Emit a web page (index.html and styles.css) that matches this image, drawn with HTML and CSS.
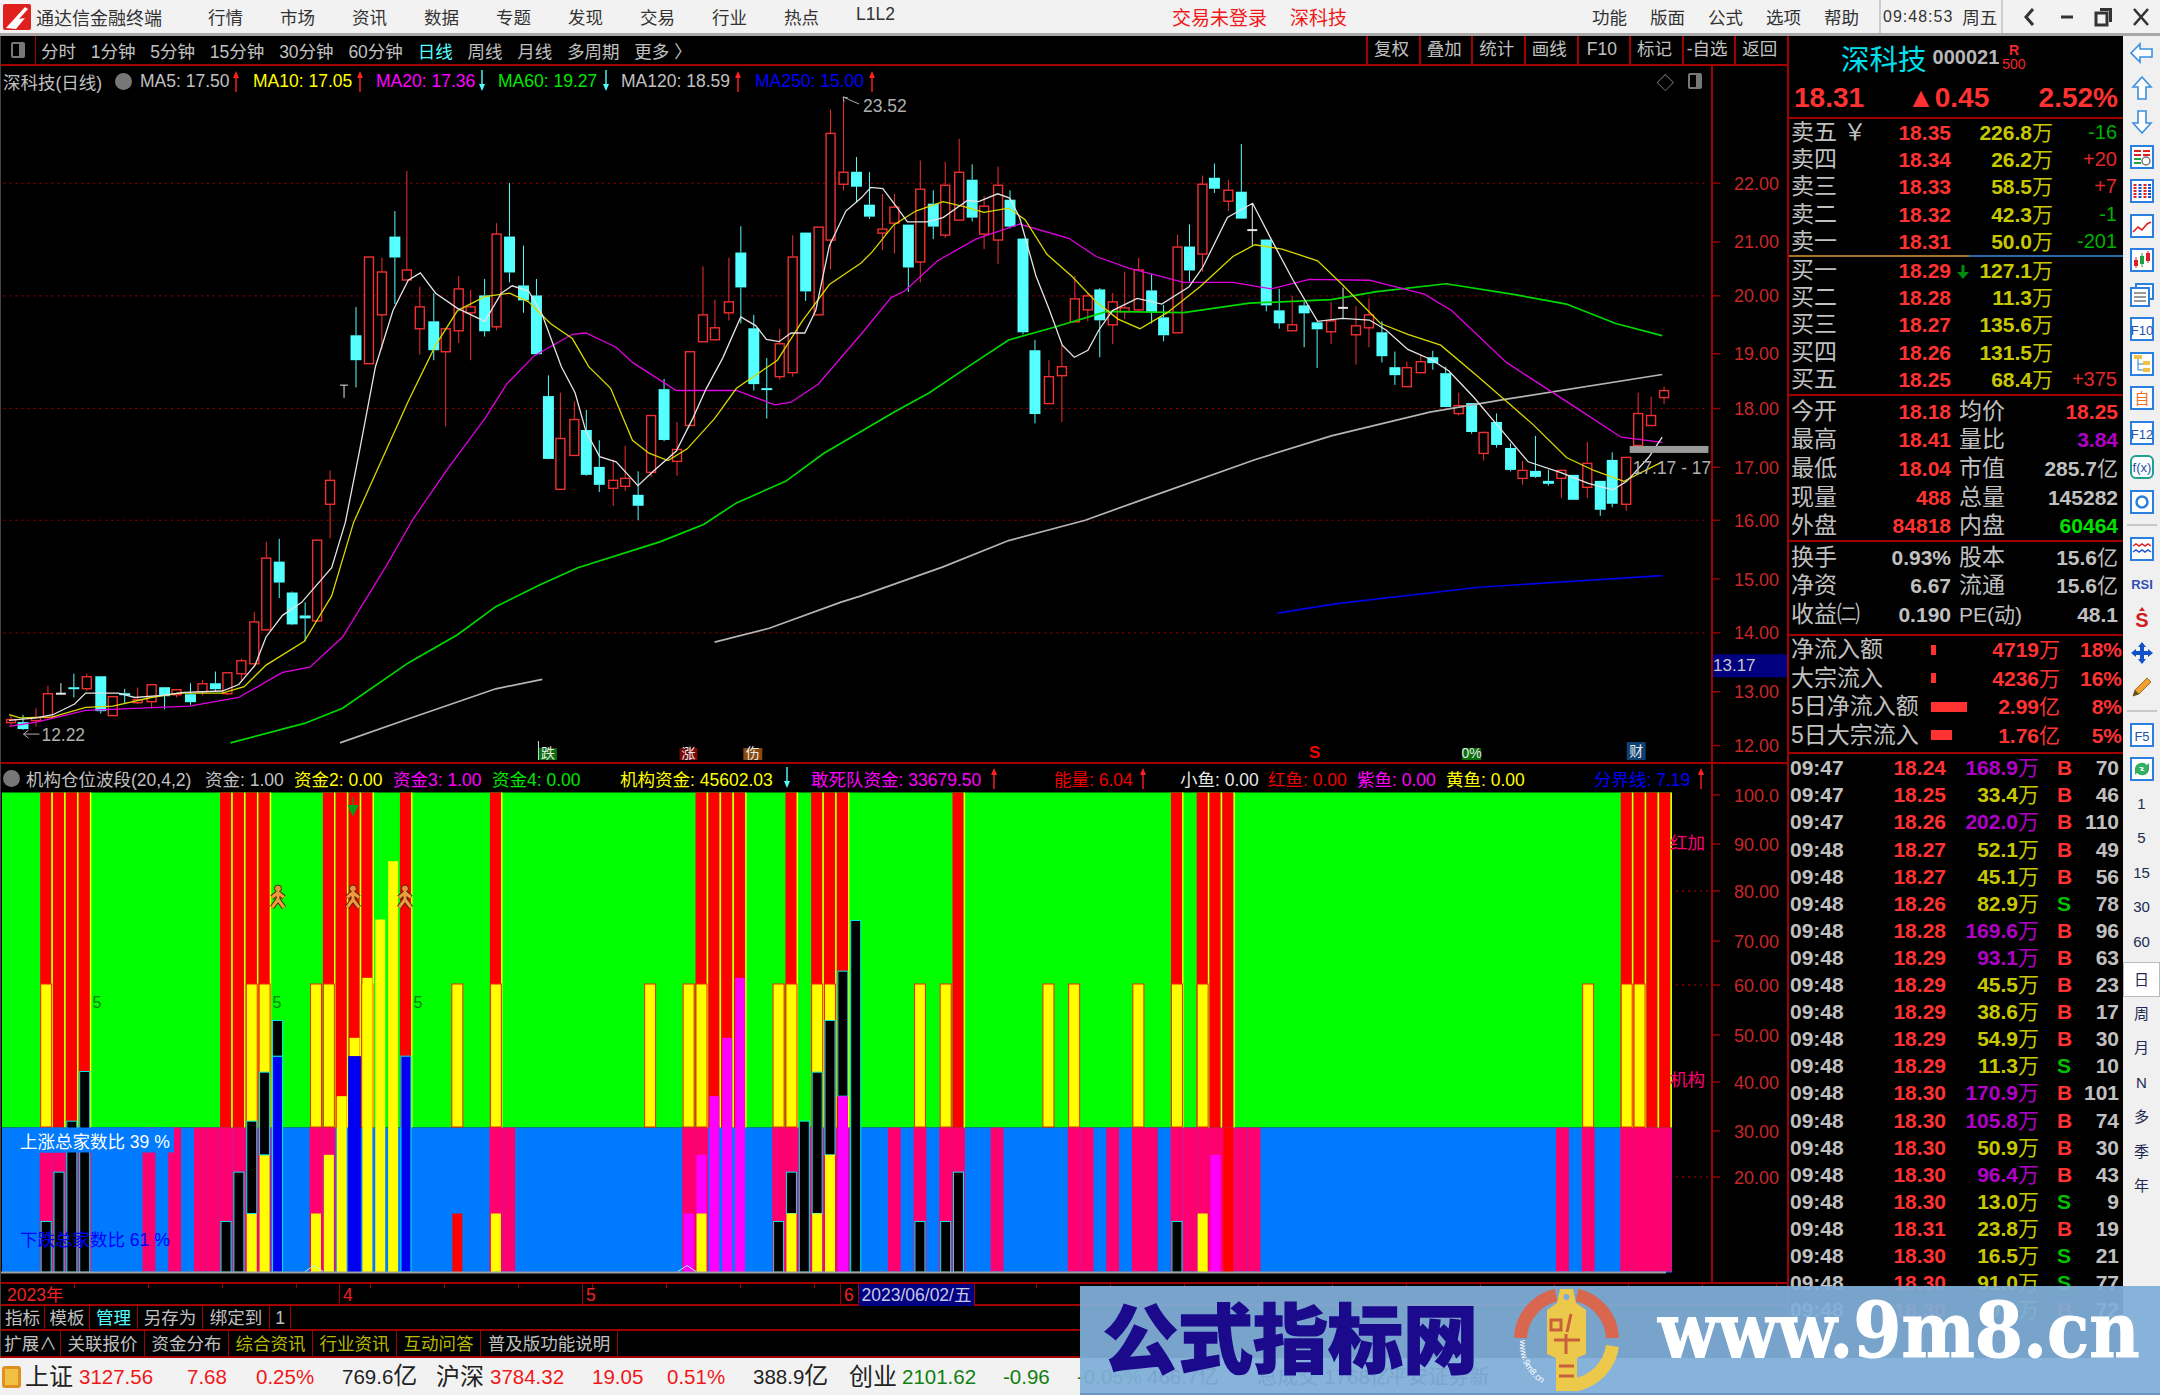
FILE: index.html

```html
<!DOCTYPE html>
<html lang="zh-CN">
<head>
  <meta charset="UTF-8" />
  <title>通达信金融终端</title>
  <link rel="stylesheet" href="styles.css">
</head>
<body>
  <svg class="defs" aria-hidden="true">
    <symbol id="arr-up" viewBox="0 0 8 22"><path d="M4 22V6" stroke="#ff2020" stroke-width="1.4"/><path d="M1 8l3-7 3 7z" fill="#ff2020"/></symbol>
    <symbol id="arr-down" viewBox="0 0 8 22"><path d="M4 0v16" stroke="#54ffff" stroke-width="1.4"/><path d="M1 14l3 7 3-7z" fill="#54ffff"/></symbol>
  </svg>

  <header class="titlebar">
    <svg class="logo" viewBox="0 0 28 26"><rect width="28" height="26" rx="2" fill="#e0201c"/><path d="M3 24L22 3l3 2-9 10 6-1-9 11z" fill="#fff"/></svg>
    <span class="app-name">通达信金融终端</span>
    <nav class="menu">
      <span>行情</span><span>市场</span><span>资讯</span><span>数据</span><span>专题</span><span>发现</span><span>交易</span><span>行业</span><span>热点</span><span>L1L2</span>
    </nav>
    <div class="alerts"><span>交易未登录</span><span>深科技</span></div>
    <nav class="menu menu-right"><span>功能</span><span>版面</span><span>公式</span><span>选项</span><span>帮助</span></nav>
    <div class="clock"><span class="time">09:48:53</span><span>周五</span></div>
    <div class="win-btns">
      <svg viewBox="0 0 36 32"><path d="M21 8l-7 8 7 8" fill="none" stroke="#333" stroke-width="3"/></svg>
      <svg viewBox="0 0 36 32"><path d="M12 16h12" stroke="#333" stroke-width="3"/></svg>
      <svg viewBox="0 0 36 32"><path d="M14 7h12v14h-3v-11h-9z" fill="#333"/><rect x="10" y="12" width="11" height="12" fill="none" stroke="#333" stroke-width="3"/></svg>
      <svg viewBox="0 0 36 32"><path d="M11 8l14 16M25 8l-14 16" stroke="#333" stroke-width="2.6"/></svg>
    </div>
  </header>

  <div class="body-row">
    <main class="workspace">
      <div class="toolbar">
        <div class="tool-icon"><i></i></div>
        <div class="periods">
          <span>分时</span><span>1分钟</span><span>5分钟</span><span>15分钟</span><span>30分钟</span><span>60分钟</span><span class="active">日线</span><span>周线</span><span>月线</span><span>多周期</span><span>更多 〉</span>
        </div>
        <div class="tool-right">
          <span>复权</span><span>叠加</span><span>统计</span><span>画线</span><span>F10</span><span>标记</span><span>-自选</span><span>返回</span>
        </div>
      </div>

      <section class="pane pane-price">
        <div class="plot">
          <div class="legend legend-price">
            <span>深科技(日线)</span><i class="knob"></i>
            <span class="c-gray">MA5: 17.50</span><svg class="arrow"><use href="#arr-up"/></svg>
            <span class="c-yellow">MA10: 17.05</span><svg class="arrow"><use href="#arr-up"/></svg>
            <span class="c-magenta">MA20: 17.36</span><svg class="arrow"><use href="#arr-down"/></svg>
            <span class="c-green">MA60: 19.27</span><svg class="arrow"><use href="#arr-down"/></svg>
            <span class="c-gray">MA120: 18.59</span><svg class="arrow"><use href="#arr-up"/></svg>
            <span class="c-blue">MA250: 15.00</span><svg class="arrow"><use href="#arr-up"/></svg>
            <span class="legend-tools"><b>◇</b><span class="tool-icon-sm"><i></i></span></span>
          </div>
          <svg id="price-plot" class="plot-svg" viewBox="0 96 1710 668"></svg>
        </div>
        <svg id="price-axis" class="axis" viewBox="0 66 75 698"></svg>
      </section>

      <section class="pane pane-fund">
        <div class="plot">
          <div class="legend legend-fund">
            <i class="knob"></i>
            <span>机构仓位波段(20,4,2)</span>
            <span class="c-gray">资金: 1.00</span>
            <span class="c-yellow">资金2: 0.00</span>
            <span class="c-magenta">资金3: 1.00</span>
            <span class="c-green">资金4: 0.00</span>
            <span class="c-yellow">机构资金: 45602.03</span><svg class="arrow"><use href="#arr-down"/></svg>
            <span class="c-magenta">敢死队资金: 33679.50</span><svg class="arrow"><use href="#arr-up"/></svg>
            <span class="c-red">能量: 6.04</span><svg class="arrow"><use href="#arr-up"/></svg>
            <span class="c-white">小鱼: 0.00</span>
            <span class="c-red">红鱼: 0.00</span>
            <span class="c-magenta">紫鱼: 0.00</span>
            <span class="c-yellow">黄鱼: 0.00</span>
            <span class="c-blue">分界线: 7.19</span><svg class="arrow"><use href="#arr-up"/></svg>
          </div>
          <svg id="fund-plot" class="plot-svg" viewBox="0 793 1710 489"></svg>
        </div>
        <svg id="fund-axis" class="axis" viewBox="0 765 75 517"></svg>
      </section>

      <div class="date-axis">
        <span>2023年</span><span>4</span><span>5</span><span>6</span><span class="date-now">2023/06/02/五</span>
      </div>
      <div class="tabs">
        <span>指标</span><span>模板</span><span class="active">管理</span><span>另存为</span><span>绑定到</span><span>1</span>
      </div>
      <div class="tabs tabs-info">
        <span>扩展∧</span><span>关联报价</span><span>资金分布</span><span class="olive">综合资讯</span><span class="olive">行业资讯</span><span class="olive">互动问答</span><span>普及版功能说明</span>
      </div>
    </main>

    <aside class="quote">
      <div class="q-name"><span class="q-title">深科技</span><span class="q-code">000021</span><span class="q-flag"><b>R</b><small>500</small></span></div>
      <div class="q-price"><span>18.31</span><span>▲0.45</span><span>2.52%</span></div>

      <div class="book">
        <div class="book-row"><span>卖五 ￥</span><b>18.35</b><em>226.8<u>万</u></em><i class="c-grn">-16</i></div>
        <div class="book-row"><span>卖四</span><b>18.34</b><em>26.2<u>万</u></em><i>+20</i></div>
        <div class="book-row"><span>卖三</span><b>18.33</b><em>58.5<u>万</u></em><i>+7</i></div>
        <div class="book-row"><span>卖二</span><b>18.32</b><em>42.3<u>万</u></em><i class="c-grn">-1</i></div>
        <div class="book-row"><span>卖一</span><b>18.31</b><em>50.0<u>万</u></em><i class="c-grn">-201</i></div>
      </div>
      <div class="book-split"></div>
      <div class="book book-buy">
        <div class="book-row"><span>买一</span><b>18.29</b><em><svg class="dn-arrow" viewBox="0 0 12 14"><path d="M4.500 0h3v7H12l-6 7-6-7h4.500z" fill="#008a10"/></svg>127.1<u>万</u></em><i></i></div>
        <div class="book-row"><span>买二</span><b>18.28</b><em>11.3<u>万</u></em><i></i></div>
        <div class="book-row"><span>买三</span><b>18.27</b><em>135.6<u>万</u></em><i></i></div>
        <div class="book-row"><span>买四</span><b>18.26</b><em>131.5<u>万</u></em><i></i></div>
        <div class="book-row"><span>买五</span><b>18.25</b><em>68.4<u>万</u></em><i>+375</i></div>
      </div>

      <div class="stats">
        <div class="stat-row"><span>今开</span><b class="up">18.18</b><span>均价</span><b class="up">18.25</b></div>
        <div class="stat-row"><span>最高</span><b class="up">18.41</b><span>量比</span><b class="purple">3.84</b></div>
        <div class="stat-row"><span>最低</span><b class="up">18.04</b><span>市值</span><b>285.7<u>亿</u></b></div>
        <div class="stat-row"><span>现量</span><b class="up">488</b><span>总量</span><b>145282</b></div>
        <div class="stat-row"><span>外盘</span><b class="up">84818</b><span>内盘</span><b class="down">60464</b></div>
      </div>
      <div class="stats stats-tight">
        <div class="stat-row"><span>换手</span><b>0.93%</b><span>股本</span><b>15.6<u>亿</u></b></div>
        <div class="stat-row"><span>净资</span><b>6.67</b><span>流通</span><b>15.6<u>亿</u></b></div>
        <div class="stat-row"><span>收益㈡</span><b>0.190</b><span class="pe">PE(动)</span><b>48.1</b></div>
      </div>
      <div class="flows">
        <div class="flow-row"><span>净流入额</span><i class="bar bar-s"></i><b>4719<u>万</u></b><b>18%</b></div>
        <div class="flow-row"><span>大宗流入</span><i class="bar bar-s"></i><b>4236<u>万</u></b><b>16%</b></div>
        <div class="flow-row"><span>5日净流入额</span><i class="bar bar-l"></i><b>2.99<u>亿</u></b><b>8%</b></div>
        <div class="flow-row"><span>5日大宗流入</span><i class="bar bar-m"></i><b>1.76<u>亿</u></b><b>5%</b></div>
      </div>
      <div id="ticks" class="ticks"></div>
    </aside>

    <aside class="rail">
      <svg viewBox="0 0 24 24"><path d="M1 12l9-9v5h12v8H10v5z" class="ic"/></svg>
      <svg viewBox="0 0 24 24"><path d="M12 1l9 10h-5v12H8V11H3z" class="ic"/></svg>
      <svg viewBox="0 0 24 24"><path d="M12 23l9-10h-5V1H8v12H3z" class="ic"/></svg>
      <svg viewBox="0 0 24 24"><rect x="1" y="1" width="22" height="22" class="bx"/><path d="M4 6h7M13 6h7M13 10h7M4 10h7" stroke="#e02020" stroke-width="2"/><path d="M4 14h7M4 18h7" stroke="#20a040" stroke-width="2"/><circle cx="16" cy="16" r="4" fill="none" stroke="#777" stroke-width="1.5"/></svg>
      <svg viewBox="0 0 24 24"><rect x="1" y="1" width="22" height="22" class="bx"/><path d="M5 5v14M15 5v14" stroke="#e02020" stroke-width="3" stroke-dasharray="2 1"/><path d="M10 5v14" stroke="#2050d0" stroke-width="3" stroke-dasharray="2 1"/><path d="M19.500 5v14" stroke="#2050d0" stroke-width="3" stroke-dasharray="2 1"/></svg>
      <svg viewBox="0 0 24 24"><rect x="1" y="1" width="22" height="22" class="bx"/><path d="M3 18l5-5 4 3 5-6 4-2" fill="none" stroke="#e02020" stroke-width="1.6"/></svg>
      <svg viewBox="0 0 24 24"><rect x="1" y="1" width="22" height="22" class="bx"/><path d="M6 9v11M18 3v12" stroke="#e02020"/><path d="M12 5v14" stroke="#20a040"/><rect x="4" y="12" width="4" height="6" fill="#e02020"/><rect x="10" y="8" width="4" height="8" fill="#20a040"/><rect x="16" y="5" width="4" height="8" fill="#e02020"/></svg>
      <svg viewBox="0 0 24 24"><rect x="6" y="1" width="17" height="15" class="bx"/><rect x="1" y="5" width="18" height="18" class="bx"/><path d="M4 10h12M4 14h12M4 18h12" stroke="#777" stroke-width="1.6"/></svg>
      <svg viewBox="0 0 24 24"><rect x="1" y="1" width="22" height="22" class="bx"/><text x="12" y="18" class="rail-txt">F10</text></svg>
      <svg viewBox="0 0 24 24"><rect x="1" y="1" width="22" height="22" class="bx"/><path d="M8 7v11h6M8 12h6" fill="none" stroke="#2a7fd8"/><rect x="4" y="3" width="8" height="4" fill="#f0c040"/><rect x="13" y="9" width="7" height="4" fill="#f0c040"/><rect x="13" y="16" width="7" height="4" fill="#f0c040"/></svg>
      <svg viewBox="0 0 24 24"><rect x="1" y="1" width="22" height="22" class="bx"/><text x="12" y="18" class="rail-txt rail-orange">自</text></svg>
      <svg viewBox="0 0 24 24"><rect x="1" y="1" width="22" height="22" class="bx"/><text x="12" y="18" class="rail-txt">F12</text></svg>
      <svg viewBox="0 0 24 24"><rect x="1" y="1" width="22" height="22" rx="5" fill="#fff" stroke="#20a090" stroke-width="2"/><text x="12" y="17" class="rail-txt">f(x)</text></svg>
      <svg viewBox="0 0 24 24"><rect x="1" y="1" width="22" height="22" class="bx"/><circle cx="12" cy="12" r="5.500" fill="none" stroke="#2a7fd8" stroke-width="2.500"/></svg>
      <hr class="rail-sep">
      <svg viewBox="0 0 24 24"><rect x="1" y="1" width="22" height="22" class="bx"/><path d="M3 9l3-2 3 2 3-2 3 2 3-2 3 2" fill="none" stroke="#e02020" stroke-width="1.5"/><path d="M3 15l3-2 3 2 3-2 3 2 3-2 3 2" fill="none" stroke="#2050d0" stroke-width="1.5"/></svg>
      <svg viewBox="0 0 24 24"><text x="12" y="17" class="rail-rsi">RSI</text></svg>
      <svg viewBox="0 0 24 24"><path d="M12 1l3 4H9z" fill="#d02020"/><text x="12" y="21" class="rail-s">S</text></svg>
      <svg viewBox="0 0 24 24"><path d="M12 1l4 5h-2v4h4V8l5 4-5 4v-2h-4v4h2l-4 5-4-5h2v-4H6v2l-5-4 5-4v2h4V6H8z" fill="#1050c8"/></svg>
      <svg viewBox="0 0 24 24"><path d="M3 21l2-6L17 3l4 4L9 19z" fill="#f0a030" stroke="#a07020"/><path d="M3 21l2-6 4 4z" fill="#553"/></svg>
      <hr class="rail-sep">
      <svg viewBox="0 0 24 24"><rect x="1" y="1" width="22" height="22" class="bx"/><text x="12" y="18" class="rail-txt">F5</text></svg>
      <svg viewBox="0 0 24 24"><rect x="1" y="1" width="22" height="22" class="bx"/><path d="M5 11a7 7 0 0 1 12-3l2-2v7h-7l2-2a4 4 0 0 0-6 1zM19 13a7 7 0 0 1-12 3l-2 2v-7h7l-2 2a4 4 0 0 0 6-1z" fill="#30b060"/></svg>
      <div class="rail-periods">
        <span>1</span><span>5</span><span>15</span><span>30</span><span>60</span>
        <span class="on">日</span><span>周</span><span>月</span><span>N</span><span>多</span><span>季</span><span>年</span>
      </div>
    </aside>
  </div>

  <footer class="statusbar">
    <i class="status-icon"></i>
    <span class="idx">上证</span><span class="up">3127.56</span><span class="up">7.68</span><span class="up">0.25%</span><span>769.6<u class="unit">亿</u></span>
    <span class="idx">沪深</span><span class="up">3784.32</span><span class="up">19.05</span><span class="up">0.51%</span><span>388.9<u class="unit">亿</u></span>
    <span class="idx">创业</span><span class="dn">2101.62</span><span class="dn">-0.96</span><span class="dn">-0.05%</span><span>466.7亿</span>
    <span>总成交 1768亿</span><span>平安证券新</span>
  </footer>

  <div class="watermark">
    <span class="wm-cn">公式指标网</span>
    <svg class="wm-logo" viewBox="0 0 105 104">
      <path d="M6.500 50A46 46 0 0 1 42 7" fill="none" stroke="#d9664e" stroke-width="13"/>
      <path d="M63 7A46 46 0 0 1 98.500 50" fill="none" stroke="#d9664e" stroke-width="13"/>
      <path d="M98.500 58A46 46 0 0 1 60 97" fill="none" stroke="#ecc94b" stroke-width="13"/>
      <path id="wm-arc" d="M6 52A46 46 0 0 0 50 102" fill="none"/>
      <text class="wm-arc-text"><textPath href="#wm-arc">www.9m8.cn</textPath></text>
      <path d="M46 1h13l3 14 10 7v44l-9 4v33H42V70l-9-4V22l10-7z" fill="#ecc94b"/>
      <circle cx="52.500" cy="9" r="3" fill="#7fadd8"/>
      <path d="M37 32h10v10H37zM57 26l-4 18M40 52h26M52 46v20M45 78h15M45 88h15" fill="none" stroke="#c8603c" stroke-width="3"/>
    </svg>
    <span class="wm-url">www.9m8.cn</span>
  </div>

  <script src="chart.js"></script>
</body>
</html>
```

FILE: styles.css

```css
:root {
  --line: #a00000;
  --up: #ff3232;
  --gray: #c0c0c0;
  --cyan: #54ffff;
}

* {
  box-sizing: border-box;
}

html, body {
  margin: 0;
  height: 100%;
}

body {
  width: 2160px;
  height: 1395px;
  overflow: hidden;
  background: #000;
  color: var(--gray);
  font-family: "Liberation Sans", "Noto Sans CJK SC", sans-serif;
  font-size: 17.5px;
  display: flex;
  flex-direction: column;
  position: relative;
}

.defs {
  position: absolute;
  width: 0;
  height: 0;
}

/* title bar */
.titlebar {
  height: 36px;
  flex: none;
  background: #f2f2f2;
  border-bottom: 3px solid #a8a8a8;
  color: #333;
  display: flex;
  align-items: center;
}

.logo {
  width: 28px;
  height: 26px;
  margin-left: 3px;
}

.app-name {
  margin-left: 5px;
  width: 172px;
  font-size: 18px;
}

.menu {
  display: flex;
  gap: 37px;
}

.alerts {
  margin-left: 277px;
  display: flex;
  gap: 23px;
  color: #f01818;
  font-size: 19px;
}

.menu-right {
  margin-left: auto;
  gap: 23px;
}

.clock {
  margin-left: 20px;
  height: 100%;
  width: 124px;
  border-left: 2px solid #ccc;
  border-right: 2px solid #ccc;
  display: flex;
  align-items: center;
  gap: 9px;
  padding-left: 2px;
}

.time {
  font-size: 16px;
  letter-spacing: 1px;
}

.win-btns {
  display: flex;
  width: 157px;
  gap: 1px;
  padding-left: 9px;
}

.win-btns svg {
  width: 36px;
  height: 32px;
}

/* toolbar */
.body-row {
  flex: 1;
  display: flex;
  min-height: 0;
}

.workspace {
  width: 1787px;
  flex: none;
  display: flex;
  flex-direction: column;
  border-left: 1px solid #444;
}

.toolbar {
  height: 30px;
  flex: none;
  display: flex;
  align-items: center;
  border-bottom: 2px solid var(--line);
}

.tool-icon {
  width: 35px;
  height: 100%;
  border-right: 1px solid var(--line);
  display: flex;
  align-items: center;
  justify-content: center;
}

.tool-icon i, .tool-icon-sm i {
  display: block;
  width: 14px;
  height: 16px;
  border: 2px solid #777;
  border-right-width: 6px;
  border-radius: 2px;
  background: #000;
}

.periods {
  margin-left: 5px;
  display: flex;
  gap: 14.8px;
}

.active {
  color: var(--cyan);
}

.tool-right {
  margin-left: auto;
  height: 100%;
  display: flex;
}

.tool-right span {
  width: 52.6px;
  border-left: 2px solid var(--line);
  text-align: center;
  padding-right: 4px;
  line-height: 27px;
}

/* panes */
.pane {
  display: flex;
  flex: none;
}

.pane-price {
  height: 698px;
  border-bottom: 2px solid var(--line);
}

.pane-fund {
  height: 518px;
}

.plot {
  width: 1710px;
  flex: none;
  display: flex;
  flex-direction: column;
}

.plot-svg {
  display: block;
  width: 1710px;
  flex: 1;
  min-height: 0;
}

.axis {
  width: 75px;
  flex: none;
  border-left: 2px solid var(--line);
  box-sizing: content-box;
  height: 100%;
}

.legend {
  height: 30px;
  flex: none;
  display: grid;
  align-items: center;
  padding-left: 2px;
  white-space: nowrap;
}

/* legend columns sit where the terminal draws them */
.legend-price {
  grid-template-columns: 112px 25px 92px 21px 103px 20px 102px 20px 104px 19px 113px 21px 113px 20px 1fr;
}

.legend-fund {
  height: 28px;
  grid-template-columns: 23px 179px 89px 99px 99px 128px 163px 28px 179px 64px 85px 41px 88px 89px 89px 148px 103px 8px;
}

.legend-tools {
  justify-self: end;
  margin-right: 9px;
  display: flex;
  align-items: center;
  gap: 14px;
}

.legend-tools b {
  font-weight: 400;
  color: #888;
}

.tool-icon-sm {
  display: block;
}

.knob {
  width: 17px;
  height: 17px;
  border-radius: 50%;
  background: #777;
}

.arrow {
  width: 8px;
  height: 22px;
}

.c-gray { color: var(--gray); }
.c-white { color: #e8e8e8; }
.c-yellow { color: #ffff00; }
.c-magenta { color: #ff00ff; }
.c-green { color: #00e800; }
.c-blue { color: #0000ff; }
.c-red { color: #f00000; }

/* date axis and tabs */
.date-axis {
  height: 24px;
  flex: none;
  display: grid;
  grid-template-columns: 339px 243px 258px 18px 116px;
  border-top: 2px solid var(--line);
  border-bottom: 2px solid var(--line);
  color: #f02020;
  line-height: 22px;
  background: repeating-linear-gradient(90deg, transparent 0 73px, var(--line) 73px 74px) 0 0 / 100% 4px no-repeat;
}

.date-axis span {
  border-right: 1px solid var(--line);
  padding-left: 3px;
}

.date-axis span:first-child {
  padding-left: 6px;
}

.date-axis .date-now {
  background: #000080;
  color: #c8c8e8;
  text-align: center;
  padding: 0;
}

.tabs {
  height: 25px;
  flex: none;
  display: grid;
  grid-template-columns: 44px 45px 48px 65px 67px 21px;
  width: max-content;
  border-bottom: 2px solid var(--line);
  line-height: 25px;
  min-width: 1080px;
}

.tabs span {
  text-align: center;
  border-right: 1px solid var(--line);
}

.tabs-info {
  height: 27px;
  line-height: 27px;
  grid-template-columns: 60px 84px 84px 84px 84px 84px 137px;
}

.olive {
  color: #b8b800;
}

/* quote panel */
.quote {
  width: 336px;
  flex: none;
  border-left: 2px solid var(--line);
  font-size: 23px;
  overflow: hidden;
  display: flex;
  flex-direction: column;
}

.q-name {
  height: 42px;
  flex: none;
  display: flex;
  align-items: center;
  padding-left: 52px;
}

.q-title {
  color: #00e0f0;
  font-size: 28.5px;
}

.q-code {
  margin-left: 6px;
  font-size: 20px;
  font-weight: 700;
  color: #b8b8b8;
}

.q-flag {
  margin-left: 3px;
  color: #f02828;
  display: flex;
  flex-direction: column;
  line-height: 14px;
  font-size: 14px;
  text-align: center;
}

.q-flag small {
  font-size: 14px;
}

.q-price {
  height: 41px;
  flex: none;
  display: grid;
  grid-template-columns: 113px 1fr auto;
  padding: 0 5px 0 5px;
  align-items: center;
  color: var(--up);
  font-size: 28px;
  font-weight: 700;
  border-bottom: 2px solid var(--line);
}

.book-row {
  height: 27.2px;
  display: grid;
  grid-template-columns: 90px 70px 102px 64px;
  align-items: center;
  padding-left: 2px;
  line-height: 27px;
}

.book-row b, .book-row em, .book-row i {
  text-align: right;
  font-style: normal;
  font-size: 21px;
  font-weight: 700;
}

.book-row b {
  color: var(--up);
}

.book-row em {
  color: #c8c800;
}

.book-row i {
  color: #e02828;
  font-weight: 400;
  font-size: 20px;
}

.book-row i.c-grn {
  color: #00b000;
}

.dn-arrow {
  width: 12px;
  height: 14px;
  margin-right: 10px;
  vertical-align: -1px;
}

u {
  text-decoration: none;
  font-weight: 400;
}

.book-split {
  height: 2px;
  flex: none;
  background: linear-gradient(90deg, #a87028 0 180px, #2a6aa8 180px);
}

.book-buy {
  border-bottom: 2px solid var(--line);
  height: 139px;
  flex: none;
}

.stats {
  border-bottom: 2px solid var(--line);
  flex: none;
  padding-top: 1px;
}

.stats-tight {
  padding-bottom: 5px;
}

.stat-row {
  height: 28.6px;
  display: grid;
  grid-template-columns: 90px 70px 8px 50px 109px;
  align-items: center;
  padding-left: 2px;
  line-height: 27px;
}

.stat-row b {
  text-align: right;
  font-size: 21px;
  color: var(--gray);
}

.stat-row b:first-of-type {
  grid-column: 2;
}

.stat-row span:nth-of-type(2) {
  grid-column: 4;
  white-space: nowrap;
}

.stat-row b:last-child {
  grid-column: 5;
}

.stat-row .pe {
  font-size: 21px;
}

.stat-row .up { color: var(--up); }
.stat-row .purple { color: #b000c8; }
.stat-row .down { color: #00e000; }

.flows {
  border-bottom: 2px solid var(--line);
  flex: none;
  padding-bottom: 3px;
}

.flow-row {
  height: 28.4px;
  display: grid;
  grid-template-columns: 140px 55px 74px 62px;
  align-items: center;
  padding-left: 2px;
  line-height: 27px;
}

.flow-row span {
  white-space: nowrap;
}

.flow-row b {
  text-align: right;
  color: var(--up);
  font-size: 21px;
}

.bar {
  display: block;
  height: 10px;
  background: var(--up);
}

.bar-s { width: 5px; }
.bar-l { width: 36px; }
.bar-m { width: 21px; }

.tick-row {
  height: 27.1px;
  display: grid;
  grid-template-columns: 62px 94px 93px 18px 13px 49px;
  align-items: center;
  padding-left: 1px;
  font-size: 21px;
  font-weight: 700;
  line-height: 27px;
}

.tick-price, .tick-vol, .tick-count {
  text-align: right;
}

.tick-price { color: var(--up); }
.tick-vol { color: #c8c800; }
.tick-vol.big { color: #b000c8; }
.tick-side { grid-column: 5; color: var(--up); }
.tick-side.s { color: #00c000; }

/* right rail */
.rail {
  flex: 1;
  background: #f0f0f0;
  display: flex;
  flex-direction: column;
  align-items: center;
}

.rail svg {
  width: 24px;
  height: 24px;
  flex: none;
  margin: 5.25px 0;
}

.ic {
  fill: #fff;
  stroke: #3a8fe0;
  stroke-width: 1.6;
}

.bx {
  fill: #fff;
  stroke: #2a80e0;
  stroke-width: 2;
}

.rail-txt {
  font-size: 13px;
  fill: #2050b0;
  text-anchor: middle;
}

.rail-orange {
  fill: #f07020;
  font-size: 15px;
}

.rail-rsi {
  font-size: 13px;
  font-weight: 700;
  fill: #3050b0;
  text-anchor: middle;
}

.rail-s {
  font-size: 20px;
  font-weight: 700;
  fill: #d02020;
  text-anchor: middle;
}

.rail-sep {
  width: 30px;
  height: 2px;
  margin: 5px 0 6px;
  border: 0;
  background: #c8c8c8;
  flex: none;
}

.rail-periods {
  display: flex;
  flex-direction: column;
  align-items: center;
  width: 100%;
  color: #1c2a50;
  font-size: 15px;
}

.rail-periods span {
  height: 34.5px;
  line-height: 34px;
  text-align: center;
  width: 100%;
}

.rail-periods .on {
  margin-top: 3px;
  background: #fff;
  border: 1px solid #bbb;
}

/* status bar */
.statusbar {
  height: 37px;
  flex: none;
  background: #f2f2f2;
  color: #222;
  display: grid;
  grid-template-columns: 25px 54px 108px 69px 86px 94px 54px 102px 75px 86px 96px 53px 101px 74px 70px 110px 130px 120px;
  align-items: center;
  font-size: 20.5px;
  line-height: 30px;
  white-space: nowrap;
}

.status-icon {
  width: 19px;
  height: 22px;
  margin-left: 2px;
  background: #f2c040;
  border: 3px solid #e09020;
  border-radius: 3px;
}

.statusbar .idx {
  font-size: 24px;
}

.statusbar .unit {
  font-size: 24px;
}

.statusbar .up { color: #f01818; }
.statusbar .dn { color: #108010; }

/* watermark sits over the lower right corner */
.watermark {
  position: absolute;
  left: 1080px;
  top: 1286px;
  width: 1080px;
  height: 109px;
  background: rgba(127, 173, 216, 0.94);
  border-bottom: 2px solid #6a96c4;
}

.wm-cn {
  position: absolute;
  left: 23px;
  top: -1px;
  font-family: "Noto Sans CJK SC", sans-serif;
  font-size: 75px;
  font-weight: 900;
  line-height: 100px;
  color: #1c0a8c;
  -webkit-text-stroke: 1.5px #1c0a8c;
  white-space: nowrap;
}

.wm-logo {
  position: absolute;
  left: 434px;
  top: 2px;
  width: 105px;
  height: 104px;
}

.wm-arc-text {
  font-size: 9px;
  fill: #fff;
}

.wm-url {
  position: absolute;
  left: 578px;
  top: -6px;
  font-family: "DejaVu Serif", serif;
  font-stretch: condensed;
  font-weight: 700;
  font-size: 77px;
  line-height: 100px;
  color: #fff;
  -webkit-text-stroke: 1px #fff;
  white-space: nowrap;
}

/* svg text */
.ax-text {
  font-size: 18px;
  fill: #c82828;
}

.ax-box {
  font-size: 17px;
  fill: #c8c8c8;
}

.mark-label {
  font-size: 17.5px;
  fill: #b0b0b0;
}

.mark-tag {
  font-size: 14px;
  fill: #e8e8e8;
  text-anchor: middle;
}

.mark-s {
  font-size: 17px;
  font-weight: 700;
  fill: #f00000;
  text-anchor: middle;
}

.fund-up {
  font-size: 17.5px;
  fill: #fff;
}

.fund-down {
  font-size: 17.5px;
  fill: #0000ff;
}

.fund-tag {
  font-size: 17.5px;
  fill: #ff0070;
}

.fund-squiggle {
  font-size: 16px;
  fill: #088008;
  text-anchor: middle;
}
```

FILE: chart.js

```js
const NS = "http://www.w3.org/2000/svg";

function add(svg, tag, attrs, text) {
  const node = document.createElementNS(NS, tag);
  for (const key in attrs) node.setAttribute(key, attrs[key]);
  if (text !== undefined) node.textContent = text;
  svg.appendChild(node);
  return node;
}

// ---- price pane: values are read off two crops, so they stay in crop coords
const zx1 = (x) => x / 1.823;
const zx2 = (x) => 860 + x / 1.823;
const zy = (y) => 90 + y / 2.306;

const candlesA = [
  [12,"r",1445,1455,1462,1470],[35,"c",1445,1462,1478,1480],[58,"r",1430,1450,1458,1472],[81,"r",1378,1395,1450,1450],
  [104,"w",1372,1395,1396,1398],[128,"c",1350,1381,1384,1405],[151,"r",1350,1357,1383,1390],[176,"c",1357,1357,1437,1442],
  [198,"r",1403,1403,1445,1445],[221,"c",1385,1396,1400,1418],[245,"r",1382,1410,1416,1420],[269,"r",1375,1375,1413,1430],
  [293,"c",1381,1381,1403,1432],[316,"r",1386,1386,1398,1405],[340,"c",1372,1397,1415,1422],[363,"r",1365,1372,1390,1400],
  [387,"c",1345,1372,1385,1390],[409,"r",1347,1347,1395,1400],[433,"r",1315,1320,1348,1365],[458,"r",1207,1230,1327,1335],
  [480,"r",1045,1081,1248,1250],[504,"c",1038,1090,1140,1175],[526,"c",1160,1163,1235,1238],[550,"c",1185,1215,1223,1275],
  [573,"r",1040,1040,1227,1230],[597,"r",880,901,957,1037],[621,"t",683,683,684,712],[644,"c",502,568,626,688],
  [668,"r",385,385,632,632],[691,"r",388,420,518,600],[715,"c",280,340,387,495],[737,"r",187,416,438,440],
  [761,"r",455,500,552,612],[786,"c",470,536,602,625],[808,"r",552,552,604,778],[832,"r",430,458,556,585],
  [854,"r",462,500,514,625],[879,"c",437,475,557,570],[901,"r",308,333,546,556],[925,"c",215,340,422,445],
  [950,"c",360,453,486,515],[973,"c",437,475,610,612],[996,"c",660,707,854,854],[1018,"r",700,804,923,923],
  [1043,"r",720,760,843,843],[1065,"c",740,786,889,892],[1089,"c",810,872,913,930],[1114,"r",855,901,921,962],
  [1136,"r",823,898,915,927],[1160,"c",882,937,962,995],[1183,"r",752,752,884,895],[1207,"c",668,692,810,812],
  [1230,"r",768,830,857,892],[1254,"r",604,604,774,776],[1278,"r",408,520,580,580],[1300,"r",485,548,577,577],
  [1325,"r",388,490,514,533],[1347,"c",315,375,457,540],[1371,"c",520,550,680,695],[1394,"c",620,689,693,760],
  [1418,"r",553,585,662,670],[1442,"r",336,385,653,663],[1465,"c",330,330,466,488],[1489,"r",316,316,520,520],
  [1512,"r",45,100,345,415],[1535,"r",20,188,216,232],[1558,"c",155,188,224,260]
];

const candlesB = [
  [14,"c",190,266,292,298],[38,"r",240,320,330,370],[61,"r",240,270,307,378],[85,"c",311,311,411,467],
  [107,"r",163,229,397,445],[131,"c",232,263,317,345],[153,"r",166,219,334,342],[178,"r",113,188,300,300],
  [202,"c",172,208,296,304],[225,"r",245,268,331,368],[249,"r",177,219,345,402],[272,"c",232,253,315,320],
  [296,"c",343,343,560,565],[318,"c",578,603,750,771],[342,"r",625,662,725,726],[367,"r",590,638,660,768],
  [390,"r",430,482,535,535],[414,"r",470,476,507,535],[436,"c",458,462,533,618],[459,"r",470,490,542,588],
  [482,"r",420,503,512,530],[506,"r",388,415,507,512],[530,"c",425,464,514,540],[553,"c",497,526,567,581],
  [577,"r",335,361,560,560],[600,"c",311,361,417,443],[624,"r",198,217,378,420],[646,"c",170,202,228,238],
  [670,"r",208,230,255,280],[695,"c",125,236,297,298],[715,"w",262,323,324,360],[741,"c",345,347,497,512],
  [763,"c",460,510,539,552],[788,"r",476,542,555,555],[810,"c",490,497,516,595],[834,"c",537,537,553,643],
  [859,"r",490,532,559,587],[881,"w",457,502,503,530],[905,"r",500,545,566,635],[928,"r",482,518,548,595],
  [952,"c",535,560,616,630],[975,"c",605,640,660,682],[998,"r",628,642,684,684],[1023,"r",612,628,653,653],
  [1045,"c",603,617,631,647],[1069,"c",640,655,733,733],[1092,"r",700,728,746,753],[1116,"c",725,725,790,795],
  [1138,"r",790,790,839,857],[1162,"c",748,768,820,827],[1187,"c",817,827,879,882],[1209,"r",858,878,897,913],
  [1233,"c",800,880,895,897],[1256,"c",878,903,912,915],[1280,"r",878,878,898,944],[1302,"c",890,890,947,948],
  [1327,"r",814,863,918,944],[1351,"c",904,904,971,985],[1373,"c",838,855,957,965],[1398,"r",849,849,957,973],
  [1420,"r",700,746,820,820],[1444,"r",709,752,774,774],[1467,"r",686,693,711,726]
];

function drawCandle(svg, c, toX) {
  const x = Math.round(toX(c[0])) + 0.5;
  const wt = zy(c[2]), bt = Math.round(zy(c[3])), bb = Math.round(zy(c[4])), wb = zy(c[5]);
  const kind = c[1];
  const color = kind === "r" ? "#f03030" : kind === "c" ? "#54ffff" : "#e8e8e8";
  if (kind === "t") {
    add(svg, "path", { d: `M${x - 4} ${bt}H${x + 4}M${x} ${bt}V${wb}`, stroke: color, fill: "none" });
    return;
  }
  add(svg, "path", { d: `M${x} ${wt}V${bt}M${x} ${bb}V${wb}`, stroke: color, fill: "none" });
  if (kind === "r") {
    add(svg, "rect", { x: x - 4.5, y: bt + 0.5, width: 9, height: Math.max(bb - bt, 1), fill: "#000", stroke: color, "stroke-width": 1.4 });
  } else if (kind === "c") {
    add(svg, "rect", { x: x - 5.5, y: bt, width: 11, height: Math.max(bb - bt, 2), fill: color });
  } else {
    add(svg, "path", { d: `M${x - 5} ${bt + 0.5}H${x + 5}`, stroke: color, "stroke-width": 2 });
  }
}

// each moving average is [crop A points, crop B points]
const lines = [
  { color: "#b4b4b4", width: 1.7, a: [[615,1510],[750,1450],[900,1385],[985,1363]], b: [] },
  { color: "#b4b4b4", width: 1.7, a: [[1300,1277],[1400,1245],[1530,1185],[1568,1170]],
    b: [[150,1103],[270,1042],[410,995],[520,945],[720,855],[860,800],[1040,745],[1180,715],[1465,658]] },
  { color: "#0000e6", width: 1.7, a: [], b: [[762,1210],[870,1188],[1130,1150],[1465,1123]] },
  { color: "#00d800", width: 1.7, a: [[415,1510],[550,1465],[620,1430],[740,1325],[830,1260],[900,1195],[980,1145],[1050,1105],[1200,1045],[1280,1005],[1340,955],[1430,905],[1500,840],[1568,790]],
    b: [[60,745],[125,700],[190,645],[270,578],[350,550],[450,512],[590,515],[710,493],[860,485],[940,467],[1070,448],[1190,472],[1290,495],[1380,540],[1465,568]] },
  { color: "#e000e0", width: 1.3, a: [[10,1472],[60,1462],[150,1435],[340,1425],[430,1405],[510,1347],[560,1335],[620,1265],[700,1100],[750,990],[810,880],[880,760],[920,680],[970,615],[1040,565],[1065,562],[1120,595],[1150,630],[1230,695],[1340,695],[1410,728],[1440,722],[1490,680],[1568,565]],
    b: [[55,480],[80,465],[140,395],[210,345],[290,310],[380,343],[430,385],[490,412],[590,445],[680,445],[750,460],[820,438],[930,440],[1030,472],[1080,510],[1180,630],[1320,745],[1390,803],[1465,815]] },
  { color: "#d8d800", width: 1.3, a: [[10,1445],[30,1452],[90,1450],[150,1428],[200,1425],[270,1405],[320,1395],[400,1395],[440,1380],[480,1330],[550,1275],[600,1170],[640,1000],[690,860],[740,720],[790,590],[830,510],[880,478],[925,470],[960,490],[1000,540],[1040,575],[1070,640],[1110,690],[1150,810],[1180,840],[1215,857],[1250,830],[1300,760],[1340,690],[1415,625],[1460,535],[1510,450],[1568,400]],
    b: [[20,375],[60,312],[100,280],[150,258],[190,270],[225,283],[270,273],[300,300],[340,380],[385,430],[430,490],[470,530],[510,552],[560,515],[620,455],[680,385],[720,358],[770,368],[835,395],[880,450],[950,540],[1000,565],[1060,590],[1130,665],[1230,775],[1290,850],[1340,880],[1395,905],[1465,860]] },
  { color: "#e4e4e4", width: 1.3, a: [[10,1458],[60,1452],[90,1445],[130,1420],[150,1395],[210,1395],[240,1405],[290,1400],[330,1393],[400,1390],[430,1375],[460,1330],[480,1265],[510,1215],[545,1185],[600,1105],[625,1000],[650,840],[680,640],[712,510],[740,440],[762,423],[790,470],[830,505],[880,535],[910,470],[930,453],[960,465],[985,520],[1020,640],[1045,700],[1065,790],[1090,848],[1120,860],[1160,915],[1185,885],[1230,835],[1260,760],[1285,690],[1315,620],[1348,525],[1375,545],[1395,577],[1418,582],[1440,562],[1465,562],[1485,510],[1510,360],[1540,280],[1568,250]],
    b: [[18,225],[40,228],[65,270],[85,305],[120,305],[150,295],[195,255],[215,258],[250,240],[272,250],[290,295],[320,430],[345,510],[368,590],[390,618],[415,602],[435,555],[460,510],[505,482],[550,495],[600,455],[625,410],[670,295],[716,262],[750,345],[790,440],[835,535],[880,528],[930,532],[960,555],[1000,600],[1045,625],[1075,650],[1120,710],[1180,800],[1220,860],[1280,885],[1330,910],[1375,925],[1400,905],[1440,850],[1465,803]] }
];

function drawPrice() {
  const svg = document.getElementById("price-plot");
  [183, 296, 409, 521, 634].forEach((y) => {
    add(svg, "path", { d: `M0 ${y + 0.5}H1706`, stroke: "#a00000", "stroke-dasharray": "2 4" });
  });
  candlesA.forEach((c) => drawCandle(svg, c, zx1));
  candlesB.forEach((c) => drawCandle(svg, c, zx2));
  lines.forEach((l) => {
    const pts = l.a.map((p) => `${zx1(p[0]).toFixed(1)},${zy(p[1]).toFixed(1)}`)
      .concat(l.b.map((p) => `${zx2(p[0]).toFixed(1)},${zy(p[1]).toFixed(1)}`));
    add(svg, "polyline", { points: pts.join(" "), fill: "none", stroke: l.color, "stroke-width": l.width });
  });

  // high / low labels
  add(svg, "path", { d: "M842 97l16 7M842 97l5 1M842 97l1 5", stroke: "#b0b0b0", fill: "none" });
  add(svg, "text", { x: 862, y: 112, class: "mark-label" }, "23.52");
  add(svg, "path", { d: "M20 736H36M20 736l5-4M20 736l5 4", stroke: "#b0b0b0", fill: "none" });
  add(svg, "text", { x: 38, y: 743, class: "mark-label" }, "12.22");

  // gray price band at the right edge
  add(svg, "rect", { x: 1631, y: 447, width: 79, height: 7, fill: "#9a9a9a" });
  add(svg, "text", { x: 1634, y: 475, class: "mark-label" }, "17.17 - 17");

  // event tags above the lower pane
  add(svg, "path", { d: "M536.5 743V762", stroke: "#c8f0c8" });
  [[537, 18, "#0a6e0a", "跌"], [678, 18, "#7a0a0a", "涨"], [742, 19, "#8a4a10", "伤"], [1463, 19, "#0a6e0a", "0%"]].forEach((t) => {
    add(svg, "rect", { x: t[0], y: 750, width: t[1], height: 12, fill: t[2] });
    add(svg, "text", { x: t[0] + t[1] / 2, y: 760, class: "mark-tag" }, t[3]);
  });
  add(svg, "text", { x: 1315, y: 760, class: "mark-s" }, "S");
  add(svg, "rect", { x: 1628, y: 744, width: 19, height: 18, fill: "#104070" });
  add(svg, "text", { x: 1637.5, y: 758, class: "mark-tag" }, "财");
}

function drawPriceAxis() {
  const svg = document.getElementById("price-axis");
  [[184,"22.00"],[243,"21.00"],[297,"20.00"],[355,"19.00"],[410,"18.00"],[469,"17.00"],[522,"16.00"],[581,"15.00"],[635,"14.00"],[694,"13.00"],[748,"12.00"]].forEach((t) => {
    add(svg, "text", { x: 21, y: t[0] + 6, class: "ax-text" }, t[1]);
    add(svg, "path", { d: `M0 ${t[0] - 0.5}H7`, stroke: "#a00000", "stroke-width": 1.4 });
  });
  add(svg, "rect", { x: 0, y: 656, width: 75, height: 23, fill: "#000080" });
  add(svg, "text", { x: 0, y: 673, class: "ax-box" }, "13.17");
}

// ---- fund pane: one slot per trading day, 12.85px wide
const slot = (n) => 6.6 + 12.85 * n;
const level = (y) => 790 + y / 3;

const redStripes = [3,4,5,6,17,18,19,20,25,26,27,28,31,38,54,55,56,57,61,63,64,65,74,91,93,94,95,126,127,128,129];
const yellowStripes = [3,19,20,24,25,28,35,38,50,53,54,60,61,63,64,71,73,81,83,88,91,93,123,126,127];
const pinkStripes = [3,4,5,6,11,13,15,16,17,18,19,20,24,25,38,39,53,54,60,61,62,63,64,65,69,71,73,74,77,83,84,86,88,89,91,92,93,94,95,96,97,121,123,126,127,128,129];

// [slot, colour key, top, bottom], tops and bottoms in crop coords
const bars = [
  [3,"k",1296,1448],[4,"k",1148,1448],[5,"k",995,1448],[6,"k",846,1448],[17,"k",1296,1448],[18,"k",1148,1448],
  [19,"y",1272,1448],[19,"k",995,1272],[20,"y",1096,1448],[20,"k",848,1096],[21,"b",800,1448],[21,"k",693,800],
  [24,"y",1272,1448],[25,"y",1096,1448],[26,"y",920,1448],[27,"y",745,800],[27,"B",800,1448],[28,"y",565,1448],
  [29,"y",390,1448],[30,"y",215,1448],[31,"r",38,800],[31,"b",800,1448],[35,"r",1272,1448],[38,"y",1272,1448],
  [53,"m",1272,1448],[54,"m",1096,1272],[54,"y",1272,1448],[55,"m",920,1448],[56,"m",745,1448],[57,"m",565,1448],
  [60,"k",1296,1448],[61,"k",1148,1272],[61,"y",1272,1448],[62,"k",995,1448],[63,"k",848,1272],[63,"y",1272,1448],
  [64,"k",693,1096],[64,"y",1096,1448],[65,"k",545,920],[65,"m",920,1448],[66,"k",393,1448],
  [71,"k",1296,1448],[73,"k",1296,1448],[74,"k",1148,1448],[91,"k",1296,1448],[93,"y",1272,1448],[94,"m",1096,1448],[95,"r",1015,1448]
];

const barFill = { y: "#ffff00", m: "#ff00ff", r: "#ff0000", b: "#0000f0", B: "#0000f0", k: "#000" };

// small running figure used as a signal mark
function drawRunner(svg, x) {
  const limbs = `M${x} 892v8M${x} 900l-6 8M${x} 900l6 8M${x - 6} 898l6-5 6 5`;
  add(svg, "path", { d: limbs, stroke: "#4a2808", "stroke-width": 5, fill: "none" });
  add(svg, "circle", { cx: x, cy: 889, r: 3.5, fill: "#e8903c", stroke: "#4a2808" });
  add(svg, "path", { d: limbs, stroke: "#f09a40", "stroke-width": 3, fill: "none" });
}

function drawFund() {
  const svg = document.getElementById("fund-plot");
  add(svg, "rect", { x: 1, y: 793, width: 1670, height: 335, fill: "#00ff00" });
  add(svg, "rect", { x: 1, y: 1128, width: 1670, height: 145, fill: "#007bff" });

  pinkStripes.forEach((n) => {
    const top = n === 3 || n === 4 ? 1153 : 1128;
    add(svg, "rect", { x: slot(n) - 6.4, y: top, width: 12.85, height: 1272 - top, fill: "#ff0070" });
  });
  redStripes.forEach((n) => {
    add(svg, "rect", { x: slot(n) - 6, y: 793, width: 11.2, height: 335, fill: "#ff0000" });
    add(svg, "rect", { x: slot(n) + 5.2, y: 793, width: 1.4, height: 335, fill: "#ffff00" });
  });
  yellowStripes.forEach((n) => {
    add(svg, "rect", { x: slot(n) - 5.5, y: 984.5, width: 11, height: 143, fill: "#ffff00", stroke: "#ff2000", "stroke-width": 1 });
  });

  bars.forEach((b) => {
    const wide = b[1] === "B" ? 6.4 : 5;
    const attrs = { x: slot(b[0]) - wide, y: level(b[2]), width: wide * 2, height: (b[3] - b[2]) / 3, fill: barFill[b[1]] };
    if (b[1] === "k" || b[1] === "b") attrs.stroke = "#00e8e8";
    add(svg, "rect", attrs);
  });

  add(svg, "rect", { x: 0, y: 1272, width: 1665, height: 2, fill: "#a0a0a0" });

  // chart markers
  [277, 352, 404].forEach((x) => drawRunner(svg, x));
  add(svg, "path", { d: "M352 797v12M347 806h10l-5 10z", stroke: "#00a020", fill: "#00a020" });
  [96, 276, 417].forEach((x) => add(svg, "text", { x: x, y: 1008, class: "fund-squiggle" }, "5"));
  [[313, 1272], [686, 1272]].forEach((p) => {
    add(svg, "path", { d: `M${p[0] - 9} ${p[1]}l9-6 9 6`, stroke: "#a8f0f0", fill: "none" });
  });

  add(svg, "rect", { x: 19, y: 1128, width: 154, height: 25, fill: "#007bff" });
  add(svg, "text", { x: 19, y: 1148, class: "fund-up" }, "上涨总家数比 39 %");
  add(svg, "text", { x: 19, y: 1246, class: "fund-down" }, "下跌总家数比 61 %");
  add(svg, "text", { x: 1669, y: 849, class: "fund-tag" }, "红加");
  add(svg, "text", { x: 1669, y: 1086, class: "fund-tag" }, "机构");
}

function drawFundAxis() {
  const svg = document.getElementById("fund-axis");
  [[796,"100.0"],[845,"90.00"],[892,"80.00"],[942,"70.00"],[986,"60.00"],[1036,"50.00"],[1083,"40.00"],[1132,"30.00"],[1178,"20.00"]].forEach((t) => {
    add(svg, "text", { x: 21, y: t[0] + 6, class: "ax-text" }, t[1]);
    add(svg, "path", { d: `M0 ${t[0] - 0.5}H7`, stroke: "#a00000", "stroke-width": 1.4 });
  });
}

// dotted level marks between the stripes and the axis
function drawLevelDots() {
  const svg = document.getElementById("fund-plot");
  [891, 985, 1177].forEach((y) => {
    add(svg, "path", { d: `M1675 ${y + 0.5}H1710`, stroke: "#c00000", "stroke-dasharray": "2 4" });
  });
}

// ---- trade list
const trades = [
  ["09:47","18.24","168.9",1,"B",70],["09:47","18.25","33.4",0,"B",46],["09:47","18.26","202.0",1,"B",110],
  ["09:48","18.27","52.1",0,"B",49],["09:48","18.27","45.1",0,"B",56],["09:48","18.26","82.9",0,"S",78],
  ["09:48","18.28","169.6",1,"B",96],["09:48","18.29","93.1",1,"B",63],["09:48","18.29","45.5",0,"B",23],
  ["09:48","18.29","38.6",0,"B",17],["09:48","18.29","54.9",0,"B",30],["09:48","18.29","11.3",0,"S",10],
  ["09:48","18.30","170.9",1,"B",101],["09:48","18.30","105.8",1,"B",74],["09:48","18.30","50.9",0,"B",30],
  ["09:48","18.30","96.4",1,"B",43],["09:48","18.30","13.0",0,"S",9],["09:48","18.31","23.8",0,"B",19],
  ["09:48","18.30","16.5",0,"S",21],["09:48","18.30","91.0",0,"S",77],["09:48","18.30","9.1",0,"B",72]
];

function drawTicks() {
  const box = document.getElementById("ticks");
  box.innerHTML = trades.map((t) =>
    `<div class="tick-row"><span>${t[0]}</span><span class="tick-price">${t[1]}</span>` +
    `<span class="tick-vol${t[3] ? " big" : ""}">${t[2]}<u>万</u></span>` +
    `<span class="tick-side${t[4] === "S" ? " s" : ""}">${t[4]}</span><span class="tick-count">${t[5]}</span></div>`
  ).join("");
}

drawPrice();
drawPriceAxis();
drawFund();
drawFundAxis();
drawLevelDots();
drawTicks();
```
